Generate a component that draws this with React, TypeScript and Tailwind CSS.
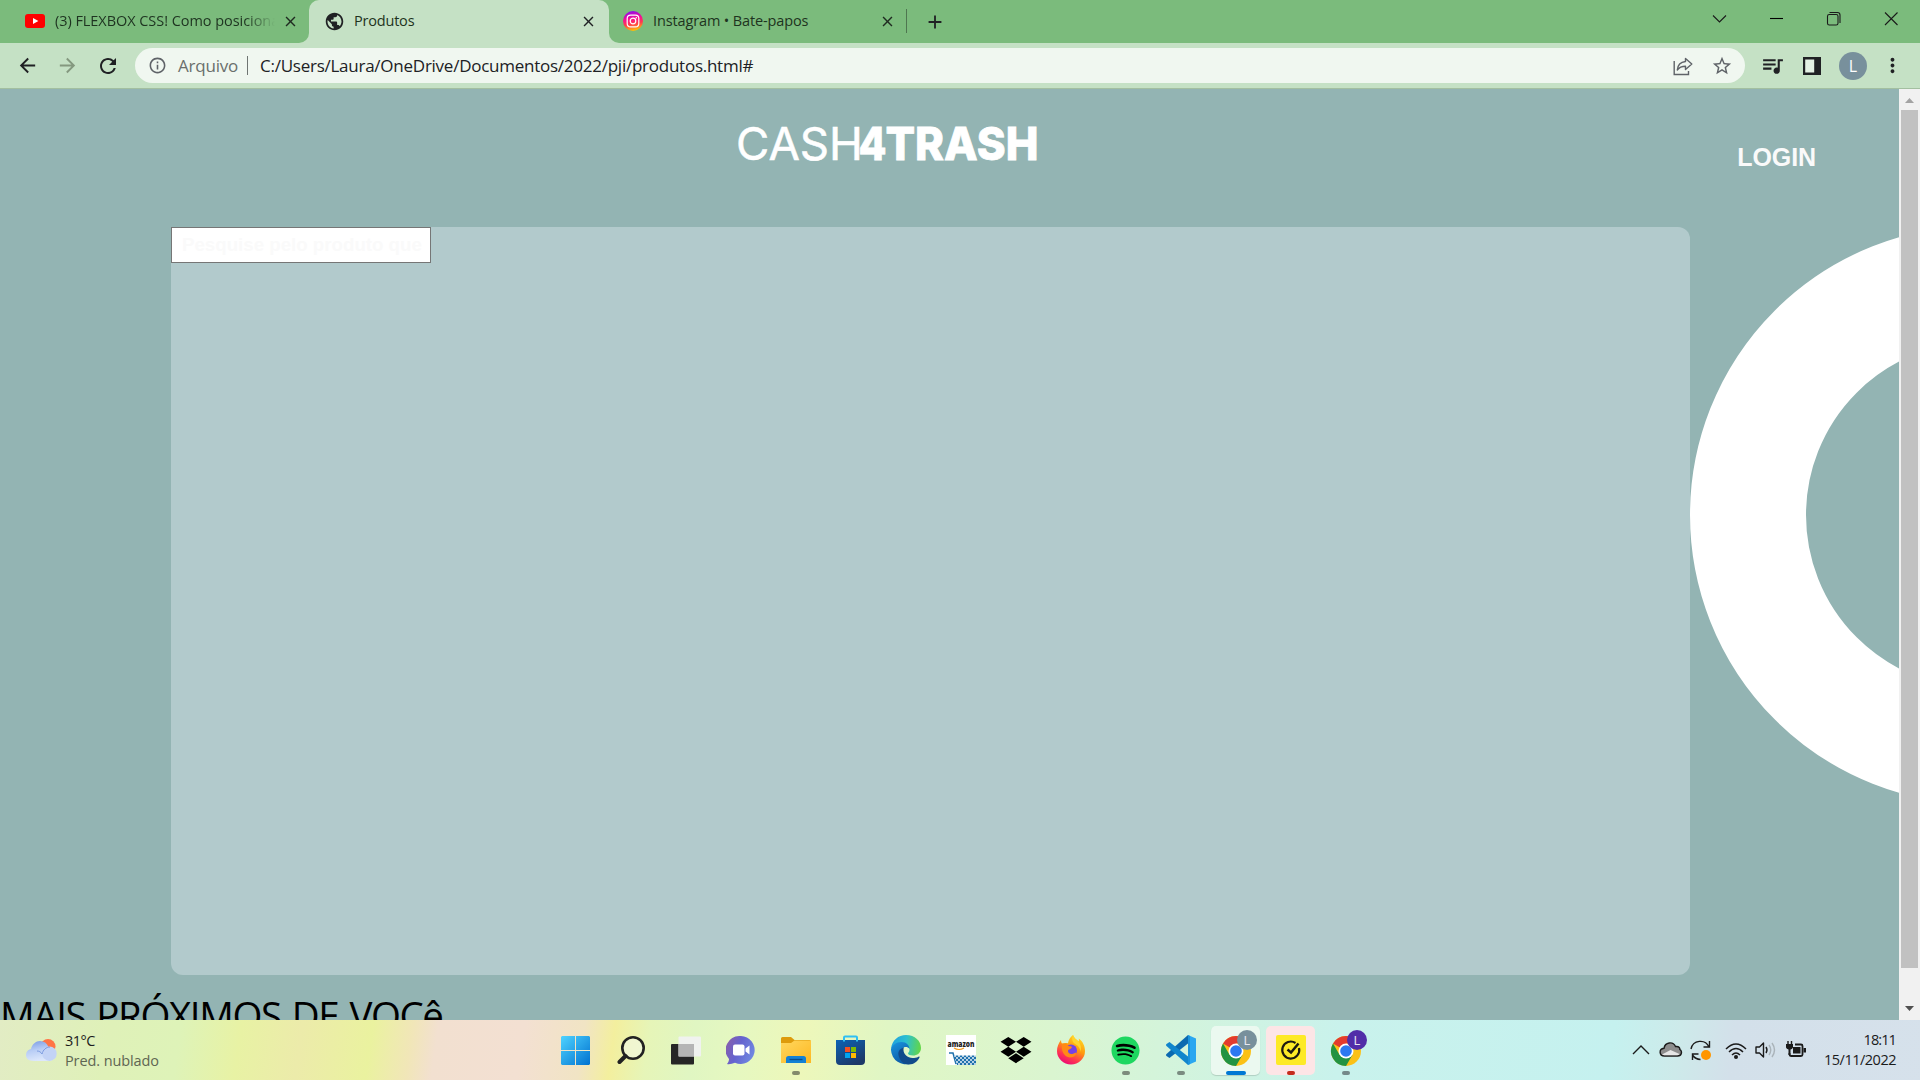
import React from "react";
import { FaSpotify, FaDropbox } from "react-icons/fa";
import {
  MdArrowBack,
  MdArrowForward,
  MdRefresh,
  MdInfoOutline,
  MdPublic,
  MdStarBorder,
  MdQueueMusic,
  MdMoreVert,
  MdClose,
  MdAdd,
} from "react-icons/md";

function YoutubeIcon() {
  return (
    <svg width="20" height="14" viewBox="0 0 20 14">
      <rect width="20" height="14" rx="3" fill="#f00" />
      <path d="M8 4l5.4 3L8 10z" fill="#fff" />
    </svg>
  );
}

function InstagramIcon() {
  return (
    <svg width="20" height="20" viewBox="0 0 20 20">
      <defs>
        <linearGradient id="ig" x1="0.35" y1="0" x2="0.55" y2="1">
          <stop offset="0" stopColor="#8a0cf0" />
          <stop offset="0.4" stopColor="#fb0f8e" />
          <stop offset="0.65" stopColor="#ff3c4e" />
          <stop offset="1" stopColor="#ffc800" />
        </linearGradient>
      </defs>
      <circle cx="10" cy="10" r="10" fill="url(#ig)" />
      <rect x="4.2" y="4.2" width="11.6" height="11.6" rx="3.4" fill="none" stroke="#fff" strokeWidth="1.2" />
      <circle cx="10" cy="10" r="2.8" fill="none" stroke="#fff" strokeWidth="1.2" />
      <circle cx="13.3" cy="6.7" r="0.8" fill="#fff" />
    </svg>
  );
}

function TabStrip() {
  return (
    <div className="flex h-[43px] bg-[#7bbb7c] text-[14.5px] text-[#1e3320]">
      <div className="flex h-[43px] w-[309px] items-center bg-[#c5e1c5]">
        <div className="flex h-full w-full items-center rounded-br-[10px] bg-[#7bbb7c] pb-px pl-[25px]">
          <YoutubeIcon />
          <div className="ml-[10px] w-[220px] overflow-hidden whitespace-nowrap [mask-image:linear-gradient(to_right,black_190px,transparent_220px)]">
            <span className="tracking-[-0.05px]">(3) FLEXBOX CSS! Como posicionar</span>
          </div>
          <MdClose className="ml-[7px] size-[17px] text-[#1f2a20]" />
        </div>
      </div>
      <div className="flex w-[300px] items-center rounded-t-[10px] bg-[#c5e1c5] pb-px pl-[15px]">
        <MdPublic className="size-[21px] text-[#202124]" />
        <span className="ml-[9px] w-[226px] tracking-[-0.2px]">Produtos</span>
        <MdClose className="size-[17px] text-[#202124]" />
      </div>
      <div className="flex h-[43px] w-[299px] bg-[#c5e1c5]">
        <div className="flex h-full w-full items-center rounded-bl-[10px] bg-[#7bbb7c] pb-px pl-[14px]">
          <InstagramIcon />
          <span className="ml-[10px] w-[218px] whitespace-nowrap tracking-[-0.13px]">Instagram • Bate-papos</span>
          <MdClose className="ml-[8px] size-[17px] text-[#1f2a20]" />
          <span className="ml-[10px] h-6 w-px bg-[#4f7650]" />
        </div>
      </div>
      <div className="flex w-[54px] items-center justify-center">
        <MdAdd className="size-[22px] text-[#202124]" />
      </div>
      <div className="ml-auto mt-[8px] flex h-5 w-[230px] items-center">
        <svg width="230" height="20" viewBox="0 0 230 20" fill="none" stroke="#1a1a1a" strokeWidth="1.1">
          <path d="M23 7.5l6.5 6.5L36 7.5" />
          <path d="M80 10.5h13" stroke="#000" />
          <rect x="137.5" y="6.5" width="10.5" height="10.5" rx="1.8" />
          <path d="M139.500 4.500h8a2.500 2.500 0 0 1 2.500 2.500v8" />
          <path d="M195 4.500l12.500 12.500M207.500 4.500L195 17" />
        </svg>
      </div>
    </div>
  );
}

function Toolbar() {
  return (
    <div className="flex h-[46px] items-center border-b border-[#a3bfa0] bg-[#c5e1c5] pl-[16px]">
      <MdArrowBack className="size-[23px] text-[#202124]" />
      <MdArrowForward className="ml-[17px] size-[23px] text-[#84987f]" />
      <MdRefresh className="ml-[17px] size-[24px] text-[#202124]" />
      <div className="ml-[15px] flex h-[35px] w-[1610px] items-center rounded-full bg-[#f0f7f0] pl-[13px] text-[17px]">
        <MdInfoOutline className="size-[19px] text-[#5f6368]" />
        <span className="ml-[11px] w-[60px] whitespace-nowrap tracking-[-0.2px] text-[#6a6f6c]">Arquivo</span>
        <span className="ml-[9px] h-[19px] w-px bg-[#6f7572]" />
        <span className="ml-[12px] whitespace-nowrap tracking-[-0.25px] text-[#202124]">
          C:/Users/Laura/OneDrive/Documentos/2022/pji/produtos.html#
        </span>
        <svg className="mr-[18px] ml-auto" width="20" height="20" viewBox="0 0 20 20" fill="none" stroke="#5f6368" strokeWidth="1.4">
          <path d="M1.200 5v13.500H15.500V15" />
          <path d="M12.500 2.500l6.300 5.500-6.300 5.500v-3.200C8.500 10.300 6.300 11.300 4.300 14c.4-5 3.300-8 8.200-8.500z" strokeLinejoin="round" />
        </svg>
        <MdStarBorder className="mr-[12px] size-[22px] text-[#5f6368]" />
      </div>
      <MdQueueMusic className="ml-[15px] size-[25px] text-[#202124]" />
      <svg className="ml-[18px]" width="18" height="18" viewBox="0 0 18 18">
        <path d="M0 0h18v18H0z" fill="#202124" />
        <path d="M2.200 2.500h9v13h-9z" fill="#e4f1e4" />
      </svg>
      <div className="ml-[18px] flex size-7 items-center justify-center rounded-full bg-[#78909c] text-[16px] text-white">L</div>
      <MdMoreVert className="ml-[14px] size-[23px] text-[#202124]" />
    </div>
  );
}

function Logo() {
  return (
    <svg
      className="absolute left-[736px] top-[20px]"
      width="320"
      height="70"
      viewBox="0 0 320 70"
      fill="#fff"
      stroke="#fff"
      fontFamily="Inter, sans-serif"
    >
      <text x="0" y="51" fontSize="45.500" strokeWidth="0.500" textLength="127" lengthAdjust="spacingAndGlyphs">
        CASH
      </text>
      <text x="122.500" y="51" fontWeight="800" fontSize="45.500" strokeWidth="0.800" textLength="28" lengthAdjust="spacingAndGlyphs">
        4
      </text>
      <text x="149.500" y="51" fontWeight="800" fontSize="45.500" strokeWidth="0.800" textLength="153" lengthAdjust="spacingAndGlyphs">
        TRASH
      </text>
    </svg>
  );
}

function Page() {
  return (
    <div className="flex h-[931px]">
      <main className="relative w-[1899px] overflow-hidden bg-[#93b4b3]">
        <header className="flex h-[138px] items-start justify-end pr-[83px] pt-[50px]">
          <Logo />
          <a className="font-['Liberation_Sans',sans-serif] text-[25px] leading-[36px] font-bold tracking-[-0.1px] text-[#fafafa]">
            LOGIN
          </a>
        </header>
        <section className="ml-[171px] h-[748px] w-[1519px] rounded-[12px] bg-[#b2cacc]">
          <div className="flex h-9 w-[260px] items-center border border-[#767676] bg-white pt-px pl-[10px] font-['Liberation_Sans',sans-serif] text-[18.7px] font-bold whitespace-nowrap text-[#fafafa]">
            Pesquise pelo produto que
          </div>
        </section>
        <div className="absolute left-[1690px] top-[137px] size-[578px] rounded-full border-[116px] border-white" />
        <h1 className="mt-[14px] text-[38.5px] leading-[53px] font-normal tracking-[-1.4px] whitespace-nowrap text-black [word-spacing:2.5px]">
          MAIS PRÓXIMOS DE VOCê
        </h1>
      </main>
      <div className="flex w-[21px] flex-col items-center bg-[#f1f1f1]">
        <svg width="21" height="21" viewBox="0 0 21 21">
          <path d="M6 14l4.500-5 4.500 5z" fill="#a3a3a3" />
        </svg>
        <div className="h-[858px] w-[17px] bg-[#c1c1c1]" />
        <svg className="mt-[31px]" width="21" height="21" viewBox="0 0 21 21">
          <path d="M6 7l4.500 5L15 7z" fill="#505050" />
        </svg>
      </div>
    </div>
  );
}

function ChromeIcon({ badge }: { badge: string }) {
  return (
    <svg width="42" height="42" viewBox="0 0 42 42">
      <g transform="translate(6,9)">
        <circle cx="15" cy="15" r="15" fill="#fbc116" />
        <path d="M15 15L2 7.500A15 15 0 0 1 28 7.500H15z" fill="#e33b2e" />
        <path d="M2 7.500A15 15 0 0 0 15 30l6.500-11.300L8.500 18.700z" fill="#229342" />
        <circle cx="15" cy="15" r="7.500" fill="#fff" />
        <circle cx="15" cy="15" r="5.800" fill="#2b78f0" />
      </g>
      <circle cx="32" cy="13" r="10" fill={badge} />
      <text x="32" y="17.500" textAnchor="middle" fontFamily="Roboto, sans-serif" fontSize="12" fill="#e8e8f0">
        L
      </text>
    </svg>
  );
}

function WindowsIcon() {
  return (
    <svg width="29" height="29" viewBox="0 0 29 29">
      <defs>
        <linearGradient id="win" gradientUnits="userSpaceOnUse" x1="0" y1="0" x2="29" y2="29">
          <stop offset="0" stopColor="#4fd3ff" />
          <stop offset="1" stopColor="#0072d0" />
        </linearGradient>
      </defs>
      <path d="M1 0h13v14H0V1zM15 0h13l1 1v13H15zM0 15h14v14H1l-1-1zM15 15h14v13l-1 1H15z" fill="url(#win)" />
    </svg>
  );
}

function SearchIcon() {
  return (
    <svg width="28" height="29" viewBox="0 0 28 29" fill="none" stroke="#222">
      <circle cx="16" cy="12" r="10.700" fill="#f4f8e8" fillOpacity="0.6" strokeWidth="2.600" />
      <path d="M8.500 20L2.500 26" strokeWidth="4" strokeLinecap="round" />
    </svg>
  );
}

function TaskViewIcon() {
  return (
    <svg width="30" height="29" viewBox="0 0 30 29">
      <rect x="0" y="8" width="23" height="20.500" rx="1" fill="#262626" />
      <rect x="7.500" y="0.500" width="22.500" height="20" rx="1" fill="#f2f2f4" fillOpacity="0.9" />
      <path d="M7.500 8H23v12.500H7.500z" fill="#b5b5b5" />
    </svg>
  );
}

function ChatIcon() {
  return (
    <svg width="30" height="30" viewBox="0 0 30 30">
      <defs>
        <linearGradient id="chat" x1="0" y1="0.100" x2="1" y2="0.500">
          <stop offset="0" stopColor="#8c5fa8" />
          <stop offset="0.500" stopColor="#6563cf" />
          <stop offset="1" stopColor="#6f86e0" />
        </linearGradient>
      </defs>
      <path d="M15 1a14 14 0 1 1-6 26.800C6 29 3 29.500 1 29c1.400-1.500 2-3.500 2-5A14 14 0 0 1 15 1z" fill="url(#chat)" />
      <rect x="7" y="9.500" width="11.500" height="11" rx="2" fill="#fff" />
      <path d="M19.500 13.500l4-3v9l-4-3z" fill="#fff" />
    </svg>
  );
}

function FolderIcon() {
  return (
    <svg width="30" height="27" viewBox="0 0 30 27">
      <defs>
        <linearGradient id="folder" x1="0" y1="0" x2="1" y2="1">
          <stop offset="0" stopColor="#ffd75e" />
          <stop offset="1" stopColor="#fdb822" />
        </linearGradient>
      </defs>
      <path d="M0 1.500Q0 0 1.500 0H10l3.500 3H28.500Q30 3 30 4.500V10H0z" fill="#dd9b0c" />
      <path d="M0 6h10l3.500-2.500H30V26H0z" fill="url(#folder)" />
      <path d="M5 26v-4.500q0-2.500 2.500-2.500h15q2.500 0 2.500 2.500V26z" fill="#1481d4" />
      <path d="M8.500 22.500h13" stroke="#0a4d8c" strokeWidth="1.300" />
    </svg>
  );
}

function StoreIcon() {
  return (
    <svg width="29" height="30" viewBox="0 0 29 30">
      <defs>
        <linearGradient id="store" x1="0" y1="0" x2="0.600" y2="1">
          <stop offset="0" stopColor="#0b63b5" />
          <stop offset="1" stopColor="#1d3868" />
        </linearGradient>
      </defs>
      <path d="M0 5h29v21q0 4-4 4H4q-4 0-4-4z" fill="url(#store)" />
      <path d="M8 6.500V2.500q0-1 1-1h11q1 0 1 1v4" fill="none" stroke="#2fc0f3" strokeWidth="2" />
      <path d="M9 12h5v5H9z" fill="#f25022" />
      <path d="M15 12h5v5h-5z" fill="#7fba00" />
      <path d="M9 18h5v5H9z" fill="#00a4ef" />
      <path d="M15 18h5v5h-5z" fill="#ffb900" />
    </svg>
  );
}

function EdgeIcon() {
  return (
    <svg width="30" height="30" viewBox="0 0 30 30">
      <defs>
        <linearGradient id="edgeTop" x1="0" y1="0.300" x2="1" y2="0.400">
          <stop offset="0" stopColor="#1f9ee0" />
          <stop offset="0.500" stopColor="#2cc0d0" />
          <stop offset="1" stopColor="#62d648" />
        </linearGradient>
        <linearGradient id="edgeBody" x1="0" y1="0" x2="0.500" y2="1">
          <stop offset="0" stopColor="#1a95e0" />
          <stop offset="1" stopColor="#0c59a4" />
        </linearGradient>
      </defs>
      <path d="M0 14C1 5 7.500 0 15 0c9 0 15 6 15 13 0 5-4 7.500-8 7.500-3 0-5-1-5-2 0-.8 1.500-1.500 1.500-3.700 0-2.800-3-5.800-7.500-5.800C5 9 1 12 0 14z" fill="url(#edgeTop)" />
      <path d="M0 14c1-3.500 5-7 10.500-7 5 0 8 3.500 8 7-1-1.500-2.300-2-3.800-2-2.700 0-4.700 2.500-4.700 6 0 5.500 4.500 11 10 10.500A15 15 0 0 1 0 15z" fill="url(#edgeBody)" />
      <path d="M12.500 12.500C8 14 7 17 7.500 20c.8 5 5 9.500 10.500 9.500 5 0 9-3.500 10.500-7 .3-.8-.3-1.200-1-.8-2 1-4 1.300-6 1.300-5 0-9-4-9-8 0-1 0-1.700.5-2.500z" fill="#114a8b" />
    </svg>
  );
}

function AmazonIcon() {
  return (
    <svg width="30" height="30" viewBox="0 0 30 30">
      <defs>
        <pattern id="mesh" width="4" height="4" patternUnits="userSpaceOnUse">
          <path d="M0 0h4v4H0z" fill="#1f71ad" />
          <circle cx="1" cy="1" r="0.900" fill="#fff" />
          <circle cx="3" cy="3" r="0.900" fill="#fff" />
        </pattern>
      </defs>
      <path d="M0 0h30v30H0z" fill="#fff" />
      <text x="1.500" y="11.500" fontFamily="Open Sans, sans-serif" fontWeight="800" fontSize="8" textLength="27" lengthAdjust="spacingAndGlyphs" fill="#222">
        amazon
      </text>
      <path d="M8 13q5 3 10 0" stroke="#f39a1e" strokeWidth="1.200" fill="none" />
      <path d="M3 18h4l3 11" stroke="#1f71ad" strokeWidth="1.500" fill="none" />
      <path d="M8 20.500h22V30H11z" fill="url(#mesh)" />
    </svg>
  );
}

function FirefoxIcon() {
  return (
    <svg width="30" height="30" viewBox="0 0 30 30">
      <defs>
        <linearGradient id="fox" x1="0.800" y1="0" x2="0.300" y2="1">
          <stop offset="0" stopColor="#ffe226" />
          <stop offset="0.450" stopColor="#ff980e" />
          <stop offset="0.750" stopColor="#ff3750" />
          <stop offset="1" stopColor="#eb0878" />
        </linearGradient>
      </defs>
      <path d="M17 0c1 3 3.500 4.500 5.500 6.500.5-1 .5-2 .3-3C27 6.500 29 11.500 29 16a14 13.500 0 0 1-28 0c0-4 1.500-8 4-11 0 1.500.3 2.500 1 3.500 2-.8 4-.7 6-.2C12.500 5.500 14 2 17 0z" fill="url(#fox)" />
      <circle cx="15" cy="15.500" r="6" fill="#7542e5" />
      <path d="M6 9c3-.5 5 .5 6.500 2 1.500.3 3 .3 3.500 1-.5 2-3 2-4 3.500-.3 2 1.500 4 4.500 3.500 2-.5 3-1.500 4-1-.8 3-3.500 4.500-6.500 4.500C8 22 5 16 6 9z" fill="#ff8a16" />
      <path d="M17 0c1 3 3.500 4.500 5.500 6.500C25 9.500 25.500 13 24.500 17c0-4-3-7-6-8.500C16 7 15.500 3 17 0z" fill="#ffd52e" />
    </svg>
  );
}

function VsCodeIcon() {
  return (
    <svg width="30" height="30" viewBox="0 0 30 30">
      <path d="M22 0l8 3.500v23L22 30z" fill="#2aa7f0" />
      <path d="M22 0v8.500L3.500 23 .5 21q-1-1 0-2z" fill="#0a69b0" />
      <path d="M22 30v-8.500L3.500 7 .5 9q-1 1 0 2z" fill="#1085cc" />
      <path d="M22 0l2 1v28l-2 1z" fill="#1b93dc" />
    </svg>
  );
}

function NortonIcon() {
  return (
    <svg width="30" height="30" viewBox="0 0 30 30">
      <rect width="30" height="30" rx="2" fill="#fdea26" />
      <path d="M19.500 8A8.500 8.500 0 1 0 23 13" fill="none" stroke="#1d1a12" strokeWidth="2.200" />
      <path d="M11.500 14.500l3.500 3 7.500-9" fill="none" stroke="#1d1a12" strokeWidth="2.500" />
    </svg>
  );
}

type TaskItem = { name: string; icon: React.ReactNode; tile?: string; mark?: string };

const tasks: TaskItem[] = [
  { name: "start", icon: <WindowsIcon /> },
  { name: "search", icon: <SearchIcon /> },
  { name: "taskview", icon: <TaskViewIcon /> },
  { name: "chat", icon: <ChatIcon /> },
  { name: "explorer", icon: <FolderIcon />, mark: "w-2 bg-[#858b6c]" },
  { name: "store", icon: <StoreIcon /> },
  { name: "edge", icon: <EdgeIcon /> },
  { name: "amazon", icon: <AmazonIcon /> },
  { name: "dropbox", icon: <FaDropbox className="h-[30px] w-[32px] text-black" /> },
  { name: "firefox", icon: <FirefoxIcon /> },
  {
    name: "spotify",
    icon: (
      <span className="block rounded-full bg-[radial-gradient(circle,black_60%,transparent_62%)]">
        <FaSpotify className="size-[29px] text-[#1ed760]" />
      </span>
    ),
    mark: "w-2 bg-[#7d8b7c]",
  },
  { name: "vscode", icon: <VsCodeIcon />, mark: "w-2 bg-[#7a8b80]" },
  {
    name: "chrome",
    icon: <ChromeIcon badge="#78909c" />,
    tile: "bg-[#ebf9f0] shadow-[0_1px_1px_rgba(0,0,0,0.15)]",
    mark: "w-5 bg-[#0078d4]",
  },
  { name: "norton", icon: <NortonIcon />, tile: "bg-[#fde5e6]", mark: "w-2 bg-[#c42b1c]" },
  { name: "chrome2", icon: <ChromeIcon badge="#512da8" />, mark: "w-2 bg-[#75898a]" },
];

function TaskButton({ item }: { item: TaskItem }) {
  const wide = item.name.startsWith("chrome");
  return (
    <div className="flex h-full w-[55px] items-center justify-center">
      <div className={`relative flex h-[49px] w-[49px] items-center justify-center rounded-[5px] ${item.tile ?? ""}`}>
        <div className={wide ? "-mt-[5px] ml-px" : ""}>{item.icon}</div>
        {item.mark && <span className={`absolute bottom-0 h-1 rounded-full ${item.mark}`} />}
      </div>
    </div>
  );
}

function Tray() {
  return (
    <svg width="180" height="30" viewBox="0 0 180 30" fill="none" stroke="#1b1b1b" strokeWidth="1.400">
      <path d="M3 19l8-8 8 8" />
      <path d="M34.500 21C29 21 28.500 14 34 13.300 35 7 43 6 45.500 11.500c4-.5 4.500 2 4.300 3C52.500 16 52 21 47.500 21z" fill="#8d8d8d" />
      <path d="M32 19.500l8.500-4.500 9 4q-.8 1.300-2.500 1.300H34z" fill="#e6e6e6" stroke="none" />
      <path d="M61 14a9.500 9.500 0 0 1 18-2M79.500 6v6h-6M62.500 25v-6h6M62.500 20a10 10 0 0 0 8 4.500" />
      <circle cx="76" cy="20" r="5" fill="#ff9500" stroke="none" />
      <g transform="translate(96,5)">
        <path d="M0 9q10-10 20 0M3 12q7-7 14 0M6 15q4-4 8 0" strokeWidth="1.500" />
        <circle cx="10" cy="17" r="2" fill="#1b1b1b" stroke="none" />
      </g>
      <path d="M126 12h3.500l4-4v14l-4-4H126z" strokeLinejoin="round" />
      <path d="M136 12q2 3 0 6" />
      <path d="M139 10q3.500 5 0 10M142 8q5 7 0 14" stroke="#aab3b9" />
      <path d="M165 9.500h6q1.500 0 1.500 1.500v8.500q0 1.500-1.500 1.500H161q-1.500 0-1.500-1.500V18" strokeWidth="1.800" />
      <path d="M163 12h7.500v6.500H163zM173.500 13h2.500v4.500h-2.500zM156 9h7v3.500q-1 2-2.500 2V20h-2v-5.500q-2-.5-2.500-2z" fill="#1b1b1b" stroke="none" />
      <path d="M158 6v4M161.500 6v4" />
    </svg>
  );
}

function Taskbar() {
  return (
    <footer className="flex h-[60px] items-center bg-[linear-gradient(98deg,#e2ecc4_0px,#dff1b8_110px,#def3b8_180px,#e8f2a4_240px,#ecebaa_300px,#eaf29f_370px,#f1e6b8_410px,#f2e0d0_435px,#f3e0d2_520px,#f1e4c4_580px,#f3ef9e_610px,#e6f5b8_645px,#e0f6c2_690px,#e6f8c0_740px,#edf7ba_800px,#e0f6c4_880px,#daf5d0_1050px,#d4f4da_1150px,#c9f2ec_1330px,#c5f1ef_1600px,#cdeaea_1665px,#d3e0ea_1720px,#d6e1eb_1920px)]">
      <div className="flex w-[548px] items-center pl-[26px]">
        <svg width="31" height="24" viewBox="0 0 31 24">
          <defs>
            <linearGradient id="cloud" x1="0" y1="0" x2="0.300" y2="1">
              <stop offset="0" stopColor="#7698e4" />
              <stop offset="0.500" stopColor="#b8cdf5" />
              <stop offset="1" stopColor="#dce7fc" />
            </linearGradient>
          </defs>
          <circle cx="22" cy="8.500" r="7.500" fill="#ff7446" />
          <path d="M5 11C6 6 10 3 14 3s7 2 8.500 6a7 7 0 0 1 1 14H8C2 23 0 20 0 17s2-5.500 5-6z" fill="url(#cloud)" />
          <circle cx="23.500" cy="15.700" r="7.200" fill="#c3d3f6" />
          <path d="M11 13c2 0 4 1 5 3 1-4 4-7 8-7" fill="none" stroke="#7c9be0" strokeWidth="1" />
        </svg>
        <div className="ml-[8px] pt-px text-[14.5px] leading-5 whitespace-nowrap">
          <div className="tracking-[-0.5px] text-[#1b1b1b]">31°C</div>
          <div className="tracking-[-0.1px] text-[#5f6653]">Pred. nublado</div>
        </div>
      </div>
      <div className="flex h-full">
        {tasks.map((t) => (
          <TaskButton key={t.name} item={t} />
        ))}
      </div>
      <div className="ml-auto flex items-center pr-[24px]">
        <Tray />
        <div className="w-[86px] text-right text-[14.5px] leading-5 whitespace-nowrap text-[#1b1b1b]">
          <div className="tracking-[-0.9px]">18:11</div>
          <div className="tracking-[-0.5px]">15/11/2022</div>
        </div>
      </div>
    </footer>
  );
}

export default function App() {
  return (
    <div className="flex h-[1080px] w-[1920px] flex-col overflow-hidden font-['Open_Sans',sans-serif]">
      <TabStrip />
      <Toolbar />
      <Page />
      <Taskbar />
    </div>
  );
}
